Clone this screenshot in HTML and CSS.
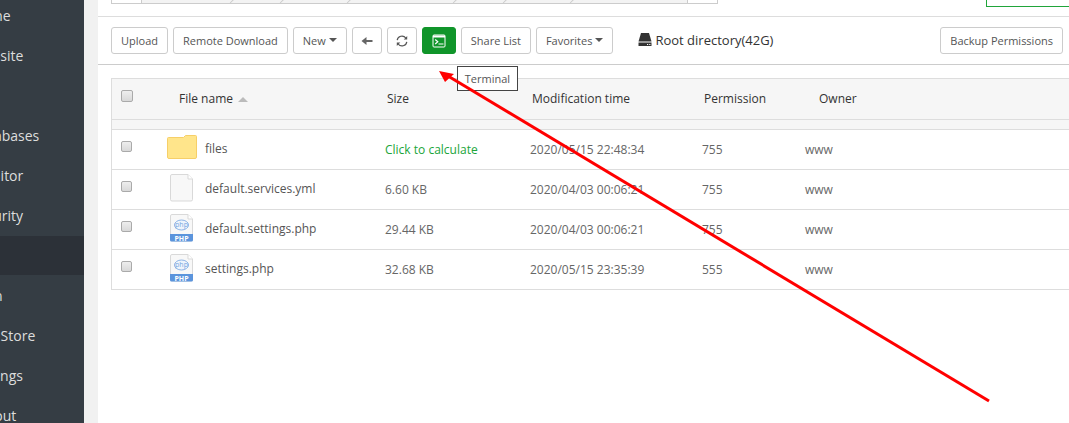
FILE: index.html
```html
<!DOCTYPE html>
<html lang="en">
<head>
    <meta charset="UTF-8">
    <meta name="viewport" content="width=device-width, initial-scale=1.0">
    <title>Files</title>
    <link rel="stylesheet" href="styles.css">
</head>
<body>

    <!-- Left menu -->
    <nav class="sidebar">
        <ul class="menu">
            <li><a href="#">Home</a></li>
            <li><a href="#">Website</a></li>
            <li><a href="#">FTP</a></li>
            <li><a href="#">Databases</a></li>
            <li><a href="#">Monitor</a></li>
            <li><a href="#">Security</a></li>
            <li class="current"><a href="#">Files</a></li>
            <li><a href="#">Cron</a></li>
            <li><a href="#">App Store</a></li>
            <li><a href="#">Settings</a></li>
            <li><a href="#">Logout</a></li>
        </ul>
    </nav>

    <main class="main">
        <!-- Path bar -->
        <div class="path-bar">
            <div class="path">
                <button type="button" class="path-btn" aria-label="Up"></button>
                <div class="path-list">
                    <span class="crumb crumb-l"></span>
                    <span class="crumb crumb-s"></span>
                    <span class="crumb crumb-m"></span>
                    <span class="crumb crumb-xl"></span>
                    <span class="crumb crumb-s"></span>
                    <span class="crumb crumb-m"></span>
                </div>
                <button type="button" class="path-btn" aria-label="Reload"></button>
            </div>
            <button type="button" class="recycle-btn" aria-label="Recycle bin"></button>
        </div>

        <!-- Toolbar -->
        <div class="toolbar">
            <button type="button" class="btn">Upload</button>
            <button type="button" class="btn">Remote Download</button>
            <button type="button" class="btn">New<span class="caret"></span></button>
            <button type="button" class="btn btn-icon" aria-label="Back">
                <svg width="12" height="10" viewBox="0 0 12 10"><path d="M0.500 5 5.500 1V4H11.500V6H5.500V9Z" fill="#666"/></svg>
            </button>
            <button type="button" class="btn btn-icon" aria-label="Refresh">
                <svg width="12" height="12" viewBox="0 0 12 12" fill="none" stroke="#555" stroke-width="1.2">
                    <path d="M1.200 5.200A4.800 4.800 0 0 1 9.800 3M10.800 6.800A4.800 4.800 0 0 1 2.200 9"/>
                    <path d="M11.200 1V4.500H7.700ZM0.800 11V7.500H4.300Z" fill="#555" stroke="none"/>
                </svg>
            </button>
            <div class="terminal">
                <button type="button" class="btn btn-green" aria-label="Terminal">
                    <svg width="14" height="14" viewBox="0 0 14 14" fill="none" stroke="#fff">
                        <rect x="1" y="1" width="12" height="12" rx="1"/>
                        <path d="M1 2.500H13" stroke-width="2"/>
                        <path d="M3.200 5.500 5.800 7.800 3.200 10M6.500 10H11.500" stroke-width="1.200"/>
                    </svg>
                </button>
                <div class="tooltip">Terminal</div>
            </div>
            <button type="button" class="btn">Share List</button>
            <button type="button" class="btn">Favorites<span class="caret"></span></button>
            <a href="#" class="disk">
                <svg width="14" height="14" viewBox="0 0 14 14"><path d="M3 0H11L13.500 8.500H0.500Z" fill="#333"/><path d="M0.500 9.500H13.500V13H.5Z" fill="#333"/><path d="M9 11.500H10.200M11.200 11.500H12.400" stroke="#fff"/></svg>
                Root directory(42G)
            </a>
            <button type="button" class="btn btn-right">Backup Permissions</button>
        </div>

        <!-- File list -->
        <table class="files">
            <colgroup>
                <col class="col-check">
                <col class="col-name">
                <col class="col-size">
                <col class="col-time">
                <col class="col-perm">
                <col>
            </colgroup>
            <thead>
                <tr>
                    <th><input type="checkbox" class="check check-all" aria-label="Select all"></th>
                    <th class="th-name">File name<span class="sort"></span></th>
                    <th>Size</th>
                    <th>Modification time</th>
                    <th>Permission</th>
                    <th class="th-owner">Owner</th>
                </tr>
                <tr class="spacer"><td colspan="6"></td></tr>
            </thead>
            <tbody>
                <tr>
                    <td><input type="checkbox" class="check" aria-label="files"></td>
                    <td><div class="file">
                        <svg width="30" height="26" viewBox="0 0 30 26"><path d="M.5 3.500Q.5 2.500 1.500 2.500H16.500L18.500.5H28.500Q29.500.5 29.500 1.500V22Q29.500 23.500 28 23.500H2Q.5 23.500 .5 22Z" fill="#ffe58b" stroke="#f6cf68"/></svg>
                        <span>files</span></div></td>
                    <td><a href="#" class="calc">Click to calculate</a></td>
                    <td>2020/05/15 22:48:34</td>
                    <td>755</td>
                    <td>www</td>
                </tr>
                <tr>
                    <td><input type="checkbox" class="check" aria-label="default.services.yml"></td>
                    <td><div class="file">
                        <svg width="30" height="28" viewBox="0 0 30 28"><path d="M3.500 2Q3.500.5 5 .5H21L25.500 5V25.500Q25.500 27 24 27H5Q3.500 27 3.500 25.500Z" fill="#f8f8f8" stroke="#d9d9d9"/><path d="M21 .5V5H25.500" fill="#fff" stroke="#d9d9d9"/></svg>
                        <span>default.services.yml</span></div></td>
                    <td>6.60 KB</td>
                    <td>2020/04/03 00:06:21</td>
                    <td>755</td>
                    <td>www</td>
                </tr>
                <tr>
                    <td><input type="checkbox" class="check" aria-label="default.settings.php"></td>
                    <td><div class="file">
                        <svg width="30" height="28" viewBox="0 0 30 28"><path d="M3.500 2Q3.500.5 5 .5H21L25.500 5V25.500Q25.500 27 24 27H5Q3.500 27 3.500 25.500Z" fill="#f8f8f8" stroke="#d9d9d9"/><path d="M21 .5V5H25.500" fill="#fff" stroke="#d9d9d9"/><ellipse cx="14.500" cy="11" rx="7" ry="5" fill="#eef4fc" stroke="#8db4e6"/><text x="14.500" y="13" class="php-logo">php</text><path d="M3 20H26V26Q26 27.500 24.500 27.500H4.500Q3 27.500 3 26Z" fill="#5b94dc"/><text x="14.500" y="26.500" class="php-label">PHP</text></svg>
                        <span>default.settings.php</span></div></td>
                    <td>29.44 KB</td>
                    <td>2020/04/03 00:06:21</td>
                    <td>755</td>
                    <td>www</td>
                </tr>
                <tr>
                    <td><input type="checkbox" class="check" aria-label="settings.php"></td>
                    <td><div class="file">
                        <svg width="30" height="28" viewBox="0 0 30 28"><path d="M3.500 2Q3.500.5 5 .5H21L25.500 5V25.500Q25.500 27 24 27H5Q3.500 27 3.500 25.500Z" fill="#f8f8f8" stroke="#d9d9d9"/><path d="M21 .5V5H25.500" fill="#fff" stroke="#d9d9d9"/><ellipse cx="14.500" cy="11" rx="7" ry="5" fill="#eef4fc" stroke="#8db4e6"/><text x="14.500" y="13" class="php-logo">php</text><path d="M3 20H26V26Q26 27.500 24.500 27.500H4.500Q3 27.500 3 26Z" fill="#5b94dc"/><text x="14.500" y="26.500" class="php-label">PHP</text></svg>
                        <span>settings.php</span></div></td>
                    <td>32.68 KB</td>
                    <td>2020/05/15 23:35:39</td>
                    <td>555</td>
                    <td>www</td>
                </tr>
            </tbody>
        </table>
    </main>

    <!-- Arrow pointing at the terminal button -->
    <svg class="arrow" width="552" height="334" viewBox="0 0 552 334">
        <path d="M9 5 550 330" stroke="#f00" stroke-width="3"/>
        <path d="M0 0 15 3 11 6.500 6 11Z" fill="#f00"/>
    </svg>

</body>
</html>
```

FILE: styles.css
```css
* {
    box-sizing: border-box;
}

body {
    display: flex;
    min-height: 100vh;
    margin: 0;
    background-color: #f1f1f1;
    color: #666;
    font-family: "Open Sans", "Noto Sans", sans-serif;
    font-size: 12px;
    overflow: hidden;
}

a {
    color: inherit;
    text-decoration: none;
}

/* Sidebar */
.sidebar {
    flex: 0 0 84px;
    height: 100vh;
    background-color: #353d44;
    overflow: hidden;
}

.menu {
    margin: -4px 0 0 -29px;
    padding: 0;
    list-style: none;
}

.menu li {
    height: 40px;
    border-bottom: 1px solid #353d44;
    color: #ddd;
    font-size: 14px;
    line-height: 39px;
    white-space: nowrap;
}

.menu a {
    display: block;
}

.menu .current {
    background-color: #2c3138;
}

/* Main panel */
.main {
    flex: 1;
    min-width: 0;
    margin-left: 14px;
    background-color: #fff;
}

.path-bar {
    display: flex;
    align-items: flex-end;
    justify-content: space-between;
    height: 17px;
    padding-left: 13px;
    border-bottom: 1px solid #ddd;
    overflow: hidden;
}

.path {
    display: flex;
    height: 32px;
    margin-bottom: 12px;
    border: 1px solid #ccc;
}

.path-btn {
    width: 29px;
    padding: 0;
    border: none;
    background-color: #fff;
}

.path-list {
    display: flex;
    width: 547px;
    border: solid #ccc;
    border-width: 0 1px;
    background-color: #f3f3f3;
}

.crumb {
    position: relative;
}

.crumb::after {
    content: "";
    position: absolute;
    right: 0;
    bottom: 4px;
    width: 20px;
    height: 20px;
    border: solid #ccc;
    border-width: 1px 1px 0 0;
    transform: rotate(45deg);
}

.crumb-s {
    width: 50px;
}

.crumb-m {
    width: 67px;
}

.crumb-l {
    width: 99px;
}

.crumb-xl {
    width: 106px;
}

.recycle-btn {
    width: 83px;
    height: 32px;
    margin-bottom: 9px;
    border: 1px solid #20a53a;
    border-right: none;
    background-color: #fff;
}

/* Toolbar */
.toolbar {
    display: flex;
    align-items: center;
    gap: 5px;
    height: 48px;
    padding: 0 6px 0 13px;
    border-bottom: 1px solid #ccc;
}

.btn {
    display: flex;
    align-items: center;
    justify-content: center;
    height: 27px;
    padding: 0 9px 1px;
    border: 1px solid #ccc;
    border-radius: 3px;
    background-color: #fff;
    color: #555;
    font-family: inherit;
    font-size: 11px;
    white-space: nowrap;
    cursor: pointer;
}

.btn:hover {
    background-color: #f5f5f5;
}

.btn-icon {
    width: 30px;
    padding: 0;
}

.btn-green,
.btn-green:hover {
    width: 34px;
    padding: 0;
    border-color: #10952a;
    background-color: #10952a;
}

.btn-right {
    margin-left: auto;
}

.caret {
    margin-left: 3px;
    border: 4px solid transparent;
    border-top-color: #555;
    border-bottom: none;
}

.terminal {
    position: relative;
}

.tooltip {
    position: absolute;
    top: 39px;
    left: 35px;
    z-index: 1;
    padding: 0 7px;
    border: 1px solid #444;
    background-color: #fff;
    color: #555;
    font-size: 11px;
    line-height: 23px;
}

.disk {
    display: flex;
    align-items: center;
    gap: 3px;
    height: 27px;
    margin-left: 20px;
    padding-bottom: 2px;
    color: #333;
    font-size: 13px;
}

/* File list */
.files {
    width: calc(100% - 13px);
    margin: 13px 0 0 13px;
    border: 1px solid #ddd;
    border-right: none;
    border-bottom: none;
    border-spacing: 0;
    table-layout: fixed;
}

.col-check {
    width: 55px;
}

.col-name {
    width: 218px;
}

.col-size {
    width: 145px;
}

.col-time {
    width: 172px;
}

.col-perm {
    width: 103px;
}

.files th,
.files td {
    height: 40px;
    padding: 0 0 1px;
    border-bottom: 1px solid #ddd;
    text-align: left;
    white-space: nowrap;
}

.files th {
    height: 41px;
    padding: 0 0 2px 2px;
    background-color: #f6f6f6;
    color: #333;
    font-weight: normal;
}

.files .th-name {
    padding-left: 12px;
}

.files .th-owner {
    padding-left: 14px;
}

.files .spacer td {
    height: 10px;
    background-color: #f6f6f6;
}

.files th:first-child,
.files td:first-child {
    padding-left: 9px;
}

.sort {
    display: inline-block;
    margin-left: 5px;
    border: 5px solid transparent;
    border-top: none;
    border-bottom-color: #bbb;
    vertical-align: 1px;
}

.check {
    display: block;
    width: 11px;
    height: 11px;
    margin: 0 0 5px;
    border: 1px solid #aaa;
    border-radius: 2px;
    background: linear-gradient(#eee, #d8d8d8);
    appearance: none;
}

.check-all {
    width: 12px;
    height: 12px;
}

.file {
    display: flex;
    align-items: center;
    gap: 8px;
    padding-bottom: 2px;
    color: #555;
}

.calc {
    color: #20a53a;
}

.php-logo {
    fill: #7ba7e0;
    font-size: 7px;
    text-anchor: middle;
}

.php-label {
    fill: #fff;
    font-size: 7px;
    font-weight: bold;
    text-anchor: middle;
}

.arrow {
    position: absolute;
    top: 71px;
    left: 439px;
    z-index: 2;
    pointer-events: none;
}
```
